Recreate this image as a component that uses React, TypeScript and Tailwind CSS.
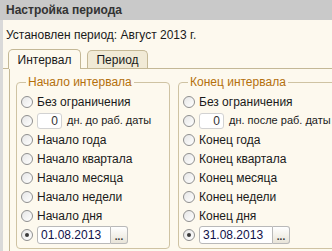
import React from 'react';

const startItems = ['Начало года', 'Начало квартала', 'Начало месяца', 'Начало недели', 'Начало дня'];
const endItems = ['Конец года', 'Конец квартала', 'Конец месяца', 'Конец недели', 'Конец дня'];

function Radio({ checked = false }: { checked?: boolean }) {
  return (
    <span className="w-[12px] h-[12px] shrink-0 rounded-full border border-[#8f8f8f] bg-gradient-to-br from-[#e6e6e6] to-white flex items-center justify-center">
      {checked && <span className="w-[4px] h-[4px] rounded-full bg-[#3a3a3a]" />}
    </span>
  );
}

function Row({ children }: { children: React.ReactNode }) {
  return <div className="h-[19px] flex items-center gap-[4px]">{children}</div>;
}

function Group({
  title,
  items,
  daysLabel,
  date,
  className,
}: {
  title: string;
  items: string[];
  daysLabel: string;
  date: string;
  className: string;
}) {
  return (
    <fieldset className={`border border-[#cfc3a3] rounded-[4px] pl-[4px] pt-[3px] ${className}`}>
      <legend className="ml-[5px] px-[2px] text-[#b4700c] leading-[14px]">{title}</legend>
      <Row>
        <Radio />
        <span>Без ограничения</span>
      </Row>
      <Row>
        <Radio />
        <span className="w-[25px] h-[16px] rounded-[3px] border border-[#d2d2d2] bg-white text-right pr-[3px] leading-[14px] text-[#333]">
          0
        </span>
        <span className="ml-[1px] whitespace-nowrap text-[11px]">{daysLabel}</span>
      </Row>
      {items.map((t) => (
        <Row key={t}>
          <Radio />
          <span>{t}</span>
        </Row>
      ))}
      <Row>
        <Radio checked />
        <div className="flex h-[18px]">
          <span className="w-[74px] rounded-l-[3px] border border-[#b9b9b9] bg-white pl-[3px] leading-[16px] text-[12px] text-[#101048]">
            {date}
          </span>
          <span className="w-[17px] rounded-r-[3px] border border-l-0 border-[#b9b9b9] bg-gradient-to-b from-white to-[#e8e4d8] flex items-end justify-center pb-[2px] text-[10px] leading-[8px] font-bold text-[#333]">
            ...
          </span>
        </div>
      </Row>
    </fieldset>
  );
}

export default function App() {
  return (
    <div className="w-[332px] h-[251px] overflow-hidden bg-[#fdf9ee] font-['Liberation_Sans',Arial,sans-serif] text-[12px] text-[#1a1a1a]">
      <div className="h-[20px] bg-[#c9c9c9] pl-[6px] flex items-center font-bold text-[12px] text-[#333]">
        Настройка периода
      </div>
      <div className="border-l-[3px] border-[#d9d9d9] h-[231px]">
        <div className="h-[29px] pl-[3px] pt-[8px] leading-[14px]">Установлен период: Август 2013 г.</div>
        <div className="flex items-end h-[20px] pl-[5px] border-b border-[#c4b896] w-[400px]">
          <div className="w-[73px] h-[20px] -mb-px rounded-t-[5px] border border-b-0 border-[#c4b896] bg-[#fdf9ee] flex items-center justify-center">
            Интервал
          </div>
          <div className="w-[61px] h-[18px] ml-[6px] rounded-t-[5px] border border-b-0 border-[#c4b896] bg-[#f1ead6] flex items-center justify-center">
            Период
          </div>
        </div>
        <div className="ml-[6px] border-l border-[#c4b896] h-[200px] pl-[6px] pt-[6px] flex gap-[8px] w-[400px]">
          <Group
            title="Начало интервала"
            items={startItems}
            daysLabel="дн. до раб. даты"
            date="01.08.2013"
            className="w-[154px] h-[174px]"
          />
          <Group
            title="Конец интервала"
            items={endItems}
            daysLabel="дн. после раб. даты"
            date="31.08.2013"
            className="w-[200px] h-[174px]"
          />
        </div>
      </div>
    </div>
  );
}
